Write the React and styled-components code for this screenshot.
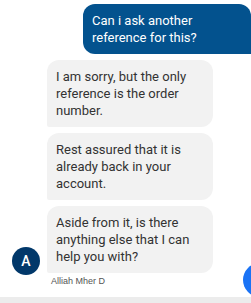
import React from 'react'
import styled, { createGlobalStyle } from 'styled-components'

const GlobalStyle = createGlobalStyle`
  html, body {
    margin: 0;
    padding: 0;
    background: #ffffff;
  }
  body {
    font-family: Roboto, "Liberation Sans", Arial, sans-serif;
  }
`

const Page = styled.div`
  position: relative;
  width: 251px;
  height: 303px;
  overflow: hidden;
  display: flex;
  flex-direction: column;
`

const Thread = styled.div`
  flex: 1;
  display: flex;
  flex-direction: column;
  padding-top: 4px;
`

const UserRow = styled.div`
  display: flex;
  justify-content: flex-end;
`

const UserBubble = styled.div`
  width: 150px;
  padding: 8px 9px;
  background: #03528e;
  color: #ffffff;
  font-size: 13px;
  line-height: 17px;
  border-radius: 12px 12px 0 12px;
`

const AgentRow = styled.div`
  display: flex;
  align-items: flex-end;
  margin-top: 6px;
`

const AvatarSlot = styled.div`
  width: 47px;
  display: flex;
  justify-content: center;
  padding-left: 5px;
  box-sizing: border-box;
  margin-bottom: -2px;
`

const Avatar = styled.div`
  width: 28px;
  height: 28px;
  border-radius: 50%;
  background: #01386a;
  color: #ffffff;
  font-size: 14px;
  font-weight: 500;
  display: flex;
  align-items: center;
  justify-content: center;
`

const Stack = styled.div`
  display: flex;
  flex-direction: column;
  gap: 6px;
`

const AgentBubble = styled.div`
  width: 148px;
  padding: 8px 9px;
  background: #f2f2f2;
  color: #333333;
  font-size: 13px;
  line-height: 17px;
  border-radius: 12px 12px 12px 2px;
`

const Name = styled.div`
  margin: 3px 0 0 51px;
  font-family: "Liberation Sans", Arial, sans-serif;
  font-size: 9px;
  line-height: 11px;
  color: #555555;
`

const Footer = styled.div`
  height: 6px;
  background: #ececec;
`

const Fab = styled.div`
  position: absolute;
  left: 243px;
  top: 263px;
  width: 34px;
  height: 34px;
  border-radius: 50%;
  background: #1a73f5;
`

const agentMessages = [
  'I am sorry, but the only reference is the order number.',
  'Rest assured that it is already back in your account.',
  'Aside from it, is there anything else that I can help you with?',
]

const App = () => {
  return (
    <>
      <GlobalStyle />
      <Page>
        <Thread>
          <UserRow>
            <UserBubble>Can i ask another reference for this?</UserBubble>
          </UserRow>
          <AgentRow>
            <AvatarSlot>
              <Avatar>A</Avatar>
            </AvatarSlot>
            <Stack>
              {agentMessages.map((text) => (
                <AgentBubble key={text}>{text}</AgentBubble>
              ))}
            </Stack>
          </AgentRow>
          <Name>Alliah Mher D</Name>
        </Thread>
        <Fab />
        <Footer />
      </Page>
    </>
  )
}

export default App
